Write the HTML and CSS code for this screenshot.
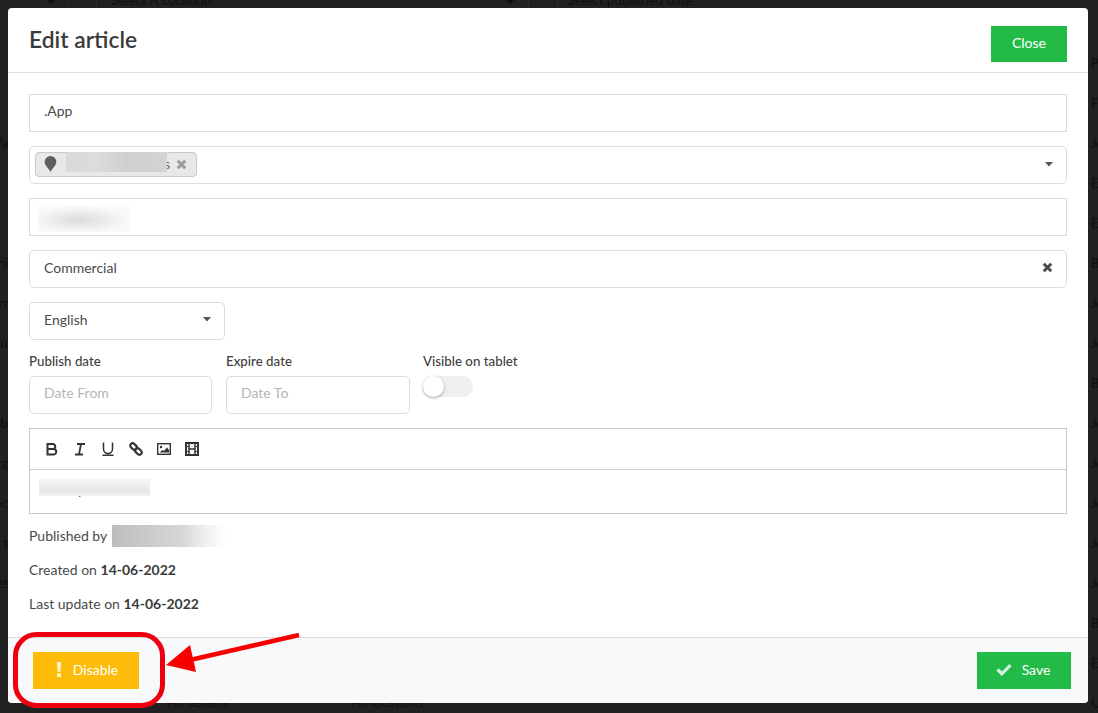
FILE: index.html
```html
<!DOCTYPE html>
<html lang="en">
<head>
<meta charset="utf-8">
<title>Edit article</title>
<link rel="stylesheet" href="styles.css">
</head>
<body>
<div class="backdrop" aria-hidden="true">
  <div class="bg-filters">
    <svg class="bg-caret bg-caret-a" width="10" height="6" viewBox="0 0 10 6"><path d="M0 0h10L5 5z" fill="#0d0d0d"/></svg>
    <span class="bg-sep bg-sep-a"></span>
    <span class="bg-sep bg-sep-b"></span>
    <span class="bg-filter bg-filter-a">Select A Location</span>
    <svg class="bg-caret bg-caret-b" width="10" height="6" viewBox="0 0 10 6"><path d="M0 0h10L5 5z" fill="#0d0d0d"/></svg>
    <span class="bg-sep bg-sep-c"></span>
    <span class="bg-sep bg-sep-d"></span>
    <span class="bg-filter bg-filter-b">Select published date</span>
  </div>
  <div class="bg-rows">
    <div class="bg-row"><span class="bg-l"></span><span class="bg-r">P</span></div>
    <div class="bg-row"><span class="bg-l"></span><span class="bg-r">Fr</span></div>
    <div class="bg-row"><span class="bg-l">Va</span><span class="bg-r">Jo</span></div>
    <div class="bg-row"><span class="bg-l"></span><span class="bg-r">E</span></div>
    <div class="bg-row"><span class="bg-l"></span><span class="bg-r">E</span></div>
    <div class="bg-row"><span class="bg-l">hi</span><span class="bg-r">B</span></div>
    <div class="bg-row"><span class="bg-l">rr</span><span class="bg-r">Jo</span></div>
    <div class="bg-row"><span class="bg-l">u</span><span class="bg-r">Jo</span></div>
    <div class="bg-row"><span class="bg-l"></span><span class="bg-r">B</span></div>
    <div class="bg-row"><span class="bg-l">b</span><span class="bg-r">Jo</span></div>
    <div class="bg-row"><span class="bg-l">g</span><span class="bg-r">Jo</span></div>
    <div class="bg-row"><span class="bg-l">ec</span><span class="bg-r">Jo</span></div>
    <div class="bg-row"><span class="bg-l">t</span><span class="bg-r">Jo</span></div>
    <div class="bg-row"><span class="bg-l">et</span><span class="bg-r">Jo</span></div>
    <div class="bg-row"><span class="bg-l"></span><span class="bg-r">B</span></div>
    <div class="bg-row"><span class="bg-l"></span><span class="bg-r">E</span></div>
    <div class="bg-row"><span class="bg-l"></span><span class="bg-r">U</span></div>
  </div>
  <span class="bg-foot bg-foot-a">All dealers</span>
  <span class="bg-foot bg-foot-b">All locations</span>
</div>

<div class="dialog">
  <header class="dialog-head">
    <h1 class="dialog-title">Edit article</h1>
    <button class="btn btn-close">Close</button>
  </header>

  <main class="dialog-body">
    <div class="field square text-up">.App</div>

    <div class="field round tags">
      <span class="chip">
        <svg class="chip-pin" width="13" height="16" viewBox="0 0 12 15"><path d="M6 15C4.600 12 .5 8.900.5 5.500a5.500 5.500 0 0 1 11 0C11.500 8.900 7.400 12 6 15z" fill="#5f5f5f"/></svg>
        <span class="chip-text">s</span>
        <svg class="chip-x" width="11" height="11" viewBox="0 0 11 11"><path d="M1.800 1.800l7.400 7.400M9.200 1.800L1.800 9.200" stroke="#9a9a9a" stroke-width="3"/></svg>
        <span class="redact redact-chip"></span>
      </span>
      <svg class="caret" width="8" height="5" viewBox="0 0 8 5"><path d="M0 0h8L4 4.500z" fill="#555"/></svg>
    </div>

    <div class="field square"><span class="redact redact-name"></span></div>

    <div class="field round between">
      <span>Commercial</span>
      <svg class="clear-x" width="11" height="11" viewBox="0 0 11 11"><path d="M1.800 1.800l7.400 7.400M9.200 1.800L1.800 9.200" stroke="#4a4a4a" stroke-width="3"/></svg>
    </div>

    <div class="field round between lang">
      <span>English</span>
      <svg width="8" height="5" viewBox="0 0 8 5"><path d="M0 0h8L4 4.500z" fill="#555"/></svg>
    </div>

    <div class="date-row">
      <div class="date-col date-col-a">
        <div class="label">Publish date</div>
        <div class="field round placeholder text-up">Date From</div>
      </div>
      <div class="date-col date-col-b">
        <div class="label">Expire date</div>
        <div class="field round placeholder text-up">Date To</div>
      </div>
      <div class="date-col">
        <div class="label">Visible on tablet</div>
        <div class="toggle"><span class="knob"></span></div>
      </div>
    </div>

    <div class="editor">
      <div class="toolbar">
        <svg width="14" height="14" viewBox="0 0 14 14" fill="none" stroke="#333" stroke-width="2"><path d="M2.500 2h5.300a2.500 2.500 0 0 1 0 5H2.500h6a2.600 2.600 0 0 1 0 5.500h-6z"/></svg>
        <svg width="14" height="14" viewBox="0 0 14 14" fill="none" stroke="#333" stroke-width="1.800"><path d="M4 2h8M2 12.500h8M8 2L6 12.500"/></svg>
        <svg width="14" height="14" viewBox="0 0 14 14" fill="none" stroke="#333" stroke-width="1.500"><path d="M2.500 .5v6.500a4.500 4.500 0 0 0 9 0V.5M1.500 13.300h11"/></svg>
        <svg width="14" height="14" viewBox="0 0 14 14" fill="none" stroke="#333" stroke-width="2.200"><rect x="-3.800" y="-2.400" width="7.600" height="4.800" rx="2.400" transform="translate(4.600 4.600) rotate(45)"/><rect x="-3.800" y="-2.400" width="7.600" height="4.800" rx="2.400" transform="translate(9.400 9.400) rotate(45)"/></svg>
        <svg width="14" height="12" viewBox="0 0 14 12"><rect x=".7" y=".7" width="12.600" height="10.600" fill="none" stroke="#333" stroke-width="1.400"/><circle cx="4" cy="4" r="1.200" fill="#333"/><path d="M2.500 9.500l3-2.500 1.500 1 3-3.500 2 2.500v2.500z" fill="#333"/></svg>
        <svg width="14" height="14" viewBox="0 0 14 14" fill="none" stroke="#333"><rect x="1" y="1" width="12" height="12" stroke-width="2"/><path d="M4 1v12M10 1v12M4 7h6" stroke-width="1.500"/><path d="M1 4.500h3M1 9.500h3M10 4.500h3M10 9.500h3" stroke-width="1"/></svg>
      </div>
      <div class="editor-area"><span class="editor-text">y</span><span class="redact redact-editor"></span></div>
    </div>

    <div class="meta">
      <p class="meta-line">Published by <span class="redact redact-user"></span></p>
      <p class="meta-line">Created on <b>14-06-2022</b></p>
      <p class="meta-line">Last update on <b>14-06-2022</b></p>
    </div>
  </main>

  <footer class="dialog-foot">
    <button class="btn btn-warn">
      <svg width="6" height="15" viewBox="0 0 6 15"><path d="M.8 0h4.400L4.400 9.800H1.600z" fill="#fff3c9"/><rect x="1" y="11.300" width="4" height="3.700" rx=".6" fill="#fff3c9"/></svg>
      <span>Disable</span>
    </button>
    <button class="btn btn-save">
      <svg width="16" height="13" viewBox="0 0 15 12"><path d="M1.500 6l4 4L13.500 2" fill="none" stroke="#d6f2dd" stroke-width="3"/></svg>
      <span>Save</span>
    </button>
  </footer>
</div>

<svg class="annotation" width="1098" height="713" viewBox="0 0 1098 713" aria-hidden="true">
  <rect x="15.500" y="634.500" width="147" height="71" rx="21" fill="none" stroke="#ee0010" stroke-width="5"/>
  <path d="M299 635L190 660" stroke="#f60000" stroke-width="4.500" fill="none"/>
  <path d="M166 665L190 645L196 672z" fill="#f60000"/>
</svg>
</body>
</html>
```
FILE: styles.css
```css
* { box-sizing: border-box; }
html, body { margin: 0; height: 713px; overflow: hidden; }
body {
  position: relative;
  background: #212121;
  padding: 8px 10px 10px 8px;
  font-family: Lato, "Liberation Sans", sans-serif;
  font-size: 14px;
  line-height: 20px;
  color: #4a4a4a;
}

/* dimmed page behind the dialog */
.backdrop { position: absolute; inset: 0; overflow: hidden; color: #101010; font-size: 13.3px; }
.bg-filters { height: 22px; position: relative; border-bottom: 1px solid #1c1c1c; }
.bg-filter { position: absolute; top: -11px; line-height: 22px; }
.bg-filter-a { left: 111px; }
.bg-filter-b { left: 568px; }
.bg-caret { position: absolute; top: -1px; }
.bg-caret-a { left: 46px; }
.bg-caret-b { left: 505px; }
.bg-sep { position: absolute; top: 0; width: 1px; height: 8px; background: #2b2b2b; }
.bg-sep-a { left: 67px; }
.bg-sep-b { left: 96px; }
.bg-sep-c { left: 528px; }
.bg-sep-d { left: 557px; }
.bg-rows { position: absolute; left: 0; right: 0; top: 43px; }
.bg-row {
  height: 40px; display: flex; justify-content: space-between; align-items: center;
  border-bottom: 1px solid #1c1c1c;
}
.bg-l { width: 8px; display: flex; justify-content: flex-end; overflow: hidden; white-space: nowrap; }
.bg-r { width: 7px; overflow: hidden; white-space: nowrap; line-height: 22px; }
.bg-foot { position: absolute; top: 692px; line-height: 20px; }
.bg-foot-a { left: 168px; }
.bg-foot-b { left: 352px; }

/* dialog */
.dialog {
  position: relative;
  width: 1080px; height: 695px;
  display: flex; flex-direction: column;
  background: #fff;
  border-radius: 4px;
  overflow: hidden;
}
.dialog-head {
  height: 65px; flex: none;
  display: flex; justify-content: space-between; align-items: flex-start;
  padding: 18px 21px 0 21px;
  border-bottom: 1px solid #dfdfdf;
}
.dialog-title { margin: 0; font-size: 22.8px; line-height: 27px; font-weight: 600; color: #3a3a3a; }
.dialog-body { flex: 1; padding: 21px 21px 0 21px; display: flex; flex-direction: column; gap: 14px; }
.dialog-foot {
  height: 66px; flex: none;
  display: flex; justify-content: space-between; align-items: flex-start;
  padding: 14px 17px 0 25px;
  background: #f7f9fb;
  border-top: 1px solid #dcdcdc;
}

/* buttons */
.btn {
  border: 0; border-radius: 0; margin: 0;
  padding: 0 0 2px;
  font: inherit; color: #fff;
  display: inline-flex; align-items: center; justify-content: center;
}
.btn-close { width: 76px; height: 36px; background: #22bb47; }
.btn-warn { width: 106px; height: 37px; background: #fdbb0a; gap: 11px; padding-left: 2px; }
.btn-save { width: 94px; height: 37px; background: #22bb47; gap: 10px; padding-right: 2px; }

/* fields */
.field {
  height: 38px; flex: none;
  border: 1px solid #dcdcdc;
  padding: 0 14px 3px;
  display: flex; align-items: center;
  background: #fff;
}
.text-up { padding-bottom: 5px; }
.round { border-radius: 5px; }
.square { border-radius: 0; }
.between { justify-content: space-between; }
.lang { width: 196px; padding-right: 13px; }
.clear-x { margin-right: -1px; }
.placeholder { color: #b5b5b5; }

.tags { padding: 0 0 2px 5px; justify-content: space-between; }
.caret { margin-right: 13px; }
.chip {
  position: relative;
  width: 162px; height: 25px;
  display: flex; align-items: center;
  background: #e8e8e8;
  border: 1px solid #c9c9c9;
  border-radius: 4px;
  padding-left: 8px;
}
.chip-pin { flex: none; }
.chip-text { margin-left: 107px; color: #666; }
.chip-x { margin-left: 6px; }

/* redacted blurred blocks */
.redact { display: block; }
.redact-chip {
  position: absolute; left: 30px; top: -1px; width: 101px; height: 20px;
  background: linear-gradient(90deg, #d9d9d9, #dcdcdc 30%, #cfcfcf 60%, #d4d4d4 100%);
}
.redact-name {
  width: 92px; height: 27px; margin: 6px 0 0 -6px;
  background: radial-gradient(ellipse 48px 13px at 45% 55%, #dcdcdc, #f9f9f9);
}
.redact-user {
  display: inline-block; vertical-align: middle;
  width: 114px; height: 22px; margin-left: 2px;
  background: linear-gradient(90deg, #bdbdbd, #d6d6d6 60%, #f2f2f2 85%, #fff);
}

/* date row */
.date-row { display: flex; flex: none; height: 60px; }
.date-col-a { width: 183px; margin-right: 14px; }
.date-col-b { width: 184px; margin-right: 13px; }
.label { font-size: 13.3px; line-height: 14px; font-weight: 500; color: #3f3f3f; margin-bottom: 8px; }
.toggle { position: relative; width: 50px; height: 21px; background: #f0f0f0; border-radius: 11px; }
.knob {
  position: absolute; left: 0; top: 0;
  width: 21px; height: 21px; border-radius: 50%;
  background: #fff; box-shadow: 0 1px 3px rgba(0, 0, 0, .35);
}

/* editor */
.editor { flex: none; height: 86px; border: 1px solid #c8c8c8; }
.toolbar {
  height: 41px; display: flex; align-items: center; gap: 14px;
  padding-left: 15px;
  border-bottom: 1px solid #cfcfcf;
}
.editor-area { position: relative; height: 43px; padding: 9px 0 0 9px; }
.redact-editor {
  position: relative;
  width: 111px; height: 17px;
  background: linear-gradient(180deg, #f6f6f6, #e6e6e6 70%, #f4f4f4);
}
.editor-text { position: absolute; left: 47px; top: 10px; line-height: 20px; color: #555; }

/* meta */
.meta { margin-top: -2px; }
.meta-line { margin: 0 0 14px; height: 20px; white-space: nowrap; }
.meta-line b { font-weight: 700; color: #3a3a3a; }
.meta-line .redact-user { margin-top: -2px; }

/* annotation */
.annotation { position: absolute; left: 0; top: 0; pointer-events: none; }
```
